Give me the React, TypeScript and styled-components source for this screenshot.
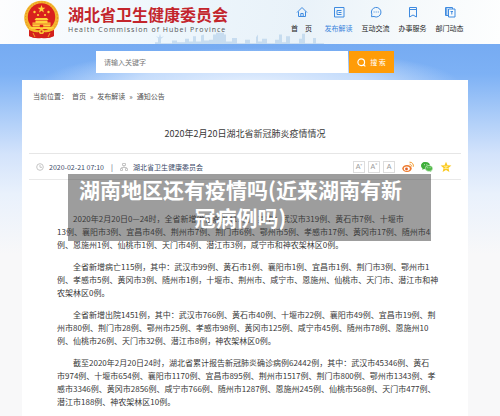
import React from "react";
import styled, { createGlobalStyle } from "styled-components";

const GlobalStyle = createGlobalStyle`
  * { box-sizing: border-box; }
  body {
    margin: 0;
    font-family: "Noto Sans CJK SC", "Noto Sans", sans-serif;
    font-size: 7px;
    color: #383838;
    background: #f8f8f9;
  }
  a { color: inherit; text-decoration: none; }
  h1, h2, p { margin: 0; font-weight: 400; }
`;

const Page = styled.div`
  position: relative;
  min-height: 100vh;
  display: flex;
  flex-direction: column;
`;

const Header = styled.header`
  position: relative;
  height: 44px;
  padding: 0 32px 0 23px;
  display: flex;
  justify-content: space-between;
  background: linear-gradient(100deg, #fdfdfe 0%, #edf6fc 34%, #e9f2f9 60%, #f5f9fb 80%, #fdfefe 100%);
`;

const Skyline = styled.svg`
  position: absolute;
  left: 31%;
  bottom: 0;
  width: 37%;
  height: 12px;
`;

const Brand = styled.a`
  position: relative;
  display: flex;
  align-items: flex-start;
  gap: 8px;
`;

const BrandText = styled.div`
  display: flex;
  flex-direction: column;
  padding-top: 4px;
`;

const BrandName = styled.span`
  font-size: 16px;
  line-height: 21px;
  font-weight: 700;
  color: #c3252c;
  white-space: nowrap;
`;

const BrandEnglish = styled.span`
  font-family: "Open Sans", sans-serif;
  font-size: 7px;
  line-height: 10px;
  letter-spacing: 1px;
  color: #555;
  white-space: nowrap;
`;

const Nav = styled.nav`
  position: relative;
  display: flex;
  padding-top: 6px;
`;

const NavItem = styled.a<{ $active?: boolean }>`
  width: 37px;
  display: flex;
  flex-direction: column;
  align-items: center;
  gap: 5px;
  line-height: 10px;
  white-space: pre;
  color: ${(p) => (p.$active ? "#3c86dc" : "#222")};
  svg { width: 12px; height: 12px; }
`;

const Backdrop = styled.div`
  flex: 1;
  padding: 7px 32px 0 22px;
  display: flex;
  flex-direction: column;
  background:
    radial-gradient(ellipse 42% 36px at 50% 40px, rgba(235, 243, 254, 0.95) 0%, rgba(215, 231, 253, 0.8) 55%, rgba(150, 192, 247, 0) 100%),
    linear-gradient(180deg, #76abf2 0, #7db1f5 30px, #a9cbf8 70px, #d3e3fb 110px, #e9f1fc 150px, #f8f8f9 210px);
`;

const Search = styled.form`
  display: flex;
  gap: 1px;
  height: 22px;
  margin: 0 16.6% 0 74px;
`;

const SearchInput = styled.input`
  flex: 1;
  min-width: 0;
  border: 0;
  border-radius: 0;
  padding: 0 8px;
  background: #fff;
  font: inherit;
  color: #555;
  &::placeholder { color: #777; opacity: 1; }
`;

const SearchButton = styled.button`
  width: 45px;
  border: 0;
  padding: 0;
  display: flex;
  align-items: center;
  justify-content: center;
  gap: 4px;
  background: #ff9c08;
  color: #fff;
  font-family: inherit;
  font-size: 7px;
  white-space: pre;
  svg { width: 9px; height: 9px; }
`;

const Panel = styled.main`
  flex: 1;
  margin-top: 7px;
  padding: 0 7px 4px;
  background: #fff;
`;

const Breadcrumb = styled.nav`
  display: flex;
  gap: 4px;
  padding: 11px 4px 0;
  line-height: 10px;
  color: #555;
`;

const ArticleTitle = styled.h1`
  margin-top: 26px;
  padding-bottom: 13px;
  border-bottom: 1px solid #e6e6e6;
  text-align: center;
  font-size: 9px;
  line-height: 13px;
`;

const Meta = styled.div`
  height: 26px;
  padding: 0 9px 0 7px;
  display: flex;
  align-items: center;
  border-bottom: 1px solid #e9e9e9;
  color: #3b4a68;
`;

const MetaInfo = styled.div`
  display: flex;
  align-items: center;
  gap: 5px;
  svg { width: 8px; height: 8px; }
`;

const Divider = styled.span`
  margin: 0 2px;
`;

const Tools = styled.div`
  margin-left: auto;
  display: flex;
  align-items: center;
  gap: 3px;
`;

const SizeButton = styled.button`
  width: 12px;
  height: 12px;
  padding: 0;
  border: 1px solid #ddd;
  background: #fff;
  color: #999;
  font-family: "Liberation Sans", sans-serif;
  font-size: 7px;
  line-height: 10px;
`;

const Share = styled.a`
  display: flex;
  margin-left: 4px;
  svg { width: 12px; height: 12px; }
`;

const Article = styled.article`
  padding: 32px 0 0 28px;
  display: flex;
  flex-direction: column;
  gap: 9px;
`;

const Paragraph = styled.p`
  font-size: 8px;
  line-height: 13px;
  text-indent: 2em;
  white-space: nowrap;
`;

const Caption = styled.div`
  position: absolute;
  top: 174px;
  left: 68px;
  right: 69px;
  padding: 1px 18px 10px 0;
  background: rgba(60, 60, 60, 0.5);
`;

const CaptionText = styled.h2`
  font-size: 21px;
  line-height: 28px;
  font-weight: 700;
  color: #fff;
  text-align: center;
  white-space: nowrap;
`;

const Emblem = () => (
  <svg width="37" height="39" viewBox="0 0 37 39" aria-hidden="true">
    <path d="M6 26 L6 36 Q11 39 18.500 38 Q26 39 31 36 L31 26Z" fill="#d4211c" />
    <circle cx="18.500" cy="18" r="17.300" fill="#f3b52d" />
    <circle cx="18.500" cy="18" r="16" fill="none" stroke="#dd8c23" strokeDasharray="1 2" />
    <circle cx="18.500" cy="17" r="13.700" fill="#d9211d" />
    <path d="M18.500 5 l1 2.700 2.900.1-2.300 1.800.8 2.800-2.400-1.600-2.400 1.600.8-2.800-2.300-1.800 2.900-.1z" fill="#ffd33c" />
    <g fill="#ffd33c">
      <circle cx="11.500" cy="12" r="1.200" /><circle cx="25.500" cy="12" r="1.200" />
      <circle cx="15" cy="15" r="1.100" /><circle cx="22" cy="15" r="1.100" />
      <path d="M13 18h11l1.500 2h-14zM12.500 20.500h12v2h-12zM9.500 22.500h18v4h-18zM6 27h25v2H6z" />
    </g>
    <path d="M9.500 24h18M17 25h3v2h-3z" stroke="#d9211d" strokeWidth=".5" fill="#d9211d" />
    <path d="M6 30v6q5 2.500 12.500 1.500Q26 38.500 31 36v-6l-6 2-6.500-2-6.500 2z" fill="#d4211c" />
    <path d="M6 28 Q10 32 15 31.500 L18.500 30 L22 31.500 Q27 32 31 28" fill="none" stroke="#f5bb2e" strokeWidth="1.300" />
    <circle cx="18.500" cy="31.500" r="2.600" fill="#f7c335" />
    <circle cx="18.500" cy="31.500" r="1" fill="#d9211d" />
    <path d="M10 33l2 4M27 33l-2 4" stroke="#f0a32a" />
  </svg>
);

const navIcon = { viewBox: "0 0 12 12", fill: "none", stroke: "#3f8be0", strokeWidth: 1, "aria-hidden": true } as const;

const HomeIcon = () => (
  <svg {...navIcon}><path d="M1 6.500 6 1.500 11 6.500M2.500 5.500V10.500H9.500V5.500M4.800 10.500V7.500H7.200V10.500" /></svg>
);
const ReadIcon = () => (
  <svg {...navIcon}><path d="M1.500 1.500h9.500v9.500h-9.500zM8.500 4.500h-4.500v4h4.500M5.500 6.500h3" /></svg>
);
const ChatIcon = () => (
  <svg {...navIcon}><path d="M1.500 10.700 1.800 8.200A4.800 4.800 0 1 1 4 10.500Z" /><path d="M3.600 6h1M5.700 6h1M7.800 6h1" /></svg>
);
const ServiceIcon = () => (
  <svg {...navIcon}><path d="M2.500 1.500h7v9.500L6 9 2.500 11zM2.500 3.500h7" /></svg>
);
const DepartmentIcon = () => (
  <svg {...navIcon}><path d="M4.500 3h6.500v8h-6.500zM4.500 9.500h-3V1.500h7V3M2.800 1.500v8M6.500 5.500h2.500M7.800 5.500v3" /></svg>
);

const navItems = [
  { label: "首　页", icon: <HomeIcon /> },
  { label: "发布解读", icon: <ReadIcon />, active: true },
  { label: "互动交流", icon: <ChatIcon /> },
  { label: "办事服务", icon: <ServiceIcon /> },
  { label: "部门动态", icon: <DepartmentIcon /> },
];

const paragraphs = [
  [
    "2020年2月20日0—24时，全省新增确诊病例411例，其中：武汉市319例、黄石市7例、十堰市",
    "13例、襄阳市3例、宜昌市4例、荆州市7例、荆门市6例、鄂州市5例、孝感市17例、黄冈市17例、随州市4",
    "例、恩施州1例、仙桃市1例、天门市4例、潜江市3例，咸宁市和神农架林区0例。",
  ],
  [
    "全省新增病亡115例，其中：武汉市99例、黄石市1例、襄阳市1例、宜昌市1例、荆门市3例、鄂州市1",
    "例、孝感市5例、黄冈市3例、随州市1例，十堰市、荆州市、咸宁市、恩施州、仙桃市、天门市、潜江市和神",
    "农架林区0例。",
  ],
  [
    "全省新增出院1451例，其中：武汉市766例、黄石市40例、十堰市22例、襄阳市49例、宜昌市19例、荆",
    "州市80例、荆门市28例、鄂州市25例、孝感市98例、黄冈市125例、咸宁市45例、随州市78例、恩施州10",
    "例、仙桃市26例、天门市32例、潜江市8例，神农架林区0例。",
  ],
  [
    "截至2020年2月20日24时，湖北省累计报告新冠肺炎确诊病例62442例，其中：武汉市45346例、黄石",
    "市974例、十堰市654例、襄阳市1170例、宜昌市895例、荆州市1517例、荆门市800例、鄂州市1343例、孝",
    "感市3346例、黄冈市2856例、咸宁市766例、随州市1287例、恩施州245例、仙桃市568例、天门市477例、",
    "潜江市188例、神农架林区10例。",
  ],
];

export default function App() {
  return (
    <>
      <GlobalStyle />
      <Page>
        <Header>
          <Skyline viewBox="0 0 185 14" preserveAspectRatio="none" aria-hidden="true">
            <path
              fill="#b4d0ea"
              opacity=".65"
              d="M0 14V12h3V7L1 5l3 1 1-4 1 4 3-1-3 3v5h11v-3h5v2h8V8h4v3h4V5h3v6h5V4l3-1v7h5V9h4V3h3V1h8v2h2v8h6V7h5v6h8V9h5v4h6V6l2-3v8h4V8h5v5h8V9h4V3h3v9h4V5h4v8h9V8h3V2h3v11h8V7h3v6h8v1z"
            />
          </Skyline>
          <Brand href="#" aria-label="湖北省卫生健康委员会">
            <Emblem />
            <BrandText>
              <BrandName>湖北省卫生健康委员会</BrandName>
              <BrandEnglish>Health Commission of Hubei Province</BrandEnglish>
            </BrandText>
          </Brand>
          <Nav>
            {navItems.map((item) => (
              <NavItem key={item.label} href="#" $active={item.active}>
                {item.icon}
                {item.label}
              </NavItem>
            ))}
          </Nav>
        </Header>

        <Backdrop>
          <Search onSubmit={(e) => e.preventDefault()}>
            <SearchInput type="text" placeholder="请输入关键字" aria-label="请输入关键字" />
            <SearchButton type="submit">
              <svg viewBox="0 0 10 10" fill="none" stroke="#fff" strokeWidth="1.300" aria-hidden="true">
                <circle cx="4.700" cy="4.700" r="3.700" />
                <path d="M7 7.500 9.300 9.300" />
              </svg>
              搜 索
            </SearchButton>
          </Search>

          <Panel>
            <Breadcrumb>
              <span>当前位置：</span>
              <a href="#">首页</a>
              <span>»</span>
              <a href="#">发布解读</a>
              <span>»</span>
              <a href="#">通知公告</a>
            </Breadcrumb>
            <ArticleTitle>2020年2月20日湖北省新冠肺炎疫情情况</ArticleTitle>
            <Meta>
              <MetaInfo>
                <svg viewBox="0 0 8 8" fill="none" stroke="#c5c5c5" aria-hidden="true">
                  <circle cx="4" cy="4" r="3.300" />
                  <path d="M4 2v2.300h2" />
                </svg>
                <time dateTime="2020-02-21T07:10">2020-02-21 07:10</time>
                <Divider>|</Divider>
                <svg viewBox="0 0 8 8" fill="none" stroke="#c5c5c5" aria-hidden="true">
                  <path d="M2.500.5h3v2h-3zM.5 5.500h2v2h-2zM5.500 5.500h2v2h-2zM4 2.500v2M1.500 5.500v-1h5v1" />
                </svg>
                <span>湖北省卫生健康委员会</span>
              </MetaInfo>
              <Tools>
                <SizeButton type="button">A⁺</SizeButton>
                <SizeButton type="button">A˚</SizeButton>
                <SizeButton type="button">A</SizeButton>
                <Share href="#" aria-label="微博">
                  <svg viewBox="0 0 12 12">
                    <ellipse cx="5" cy="7.500" rx="4.700" ry="3.500" fill="#ee7a2c" />
                    <ellipse cx="4.800" cy="7.700" rx="3" ry="2.100" fill="#fff" />
                    <circle cx="4.500" cy="7.900" r="1.400" fill="#e0602a" />
                    <path d="M7.500 1.200a3.500 3.500 0 0 1 3.700 4.600M7.600 3.200a1.700 1.700 0 0 1 1.700 2.300" fill="none" stroke="#f39a2c" />
                  </svg>
                </Share>
                <Share href="#" aria-label="微信">
                  <svg viewBox="0 0 12 12">
                    <path d="M4.500 1C2 1 .2 2.600.2 4.700c0 1.200.6 2 1.500 2.700L1.300 9 3 8h2z" fill="#3fae3a" />
                    <ellipse cx="4.600" cy="4.600" rx="4.300" ry="3.600" fill="#3fae3a" />
                    <path d="m9.500 9 .9 2-2.200-1.200z" fill="#3fae3a" />
                    <ellipse cx="8" cy="7.400" rx="3.700" ry="3" fill="#4fb847" stroke="#fff" strokeWidth=".5" />
                    <path d="M3 3.700h.8M5.500 3.700h.8M6.500 6.700h.7M8.700 6.700h.7" stroke="#fff" strokeWidth=".8" />
                  </svg>
                </Share>
                <Share href="#" aria-label="QQ空间">
                  <svg viewBox="0 0 12 12">
                    <path d="m6 .8 1.500 3.500 3.900.3-3 2.500 1 3.800L6 8.900 2.600 10.900l1-3.800-3-2.500 3.900-.3z" fill="#fbc91f" />
                    <path d="M4 5.300h3.500L4.500 7.500H8" fill="none" stroke="#fff2a8" strokeWidth=".8" />
                  </svg>
                </Share>
              </Tools>
            </Meta>
            <Article>
              {paragraphs.map((lines) => (
                <Paragraph key={lines[0]}>
                  {lines.map((line, i) => (
                    <React.Fragment key={line}>
                      {i > 0 && <br />}
                      {line}
                    </React.Fragment>
                  ))}
                </Paragraph>
              ))}
            </Article>
          </Panel>
        </Backdrop>

        <Caption>
          <CaptionText>
            湖南地区还有疫情吗(近来湖南有新
            <br />
            冠病例吗)
          </CaptionText>
        </Caption>
      </Page>
    </>
  );
}
